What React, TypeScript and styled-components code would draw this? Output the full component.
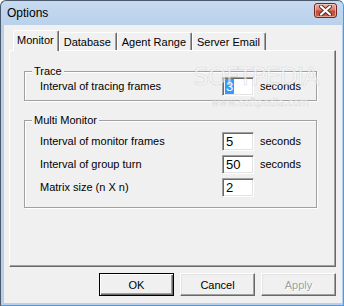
import React from "react";
import styled, { createGlobalStyle } from "styled-components";

const Global = createGlobalStyle`
  html, body { margin: 0; padding: 0; background: #ffffff; }
  body { font-family: "Liberation Sans", Arial, sans-serif; }
  * { box-sizing: border-box; }
`;

const Window = styled.div`
  position: relative;
  width: 344px;
  height: 306px;
  display: flex;
  flex-direction: column;
  background: linear-gradient(#c6daf0, #b7cfea 30px, #b7cfea);
  border-left: 1px solid #4b5a6c;
  border-top: 1px solid #4b5a6c;
  border-right: 1px solid #38a4f0;
  border-bottom: 1px solid #38a4f0;
  border-radius: 6px 6px 0 0;
  overflow: hidden;
`;

const TitleBar = styled.div`
  height: 24px;
  display: flex;
  align-items: center;
  padding: 0 6px 2px 6px;
  flex: none;
`;

const Title = styled.div`
  flex: 1;
  font-size: 12px;
  color: #000;
  padding-top: 1px;
`;

const CloseButton = styled.div`
  width: 23px;
  height: 15px;
  margin-top: -3px;
  border: 1px solid #6e2a22;
  border-radius: 3px;
  background: linear-gradient(#eab2a5, #d8806e 45%, #c34a36 55%, #c9614c);
  box-shadow: inset 0 0 0 1px rgba(255, 220, 210, 0.55);
  display: flex;
  align-items: center;
  justify-content: center;
`;

const Client = styled.div`
  flex: 1;
  margin: 0 1px 2px 3px;
  background: #f0f0f0;
  display: flex;
  flex-direction: column;
  padding: 5px 6px 7px 5px;
  font-size: 11px;
  color: #000;
`;

const TabStrip = styled.div`
  height: 20px;
  display: flex;
  align-items: flex-end;
  padding-left: 4px;
  position: relative;
  z-index: 1;
`;

const Tab = styled.div<{ $active?: boolean }>`
  height: ${(p) => (p.$active ? 21 : 18)}px;
  margin-bottom: ${(p) => (p.$active ? -1 : 0)}px;
  padding: ${(p) => (p.$active ? "3px 4px 0 3px" : "1px 5px 0 4px")};
  display: flex;
  align-items: ${(p) => (p.$active ? "flex-start" : "center")};
  background: #f0f0f0;
  border-top: 1px solid #ffffff;
  border-left: 1px solid #ffffff;
  border-right: 1px solid #696969;
  box-shadow: inset -1px 0 0 #a0a0a0;
  border-radius: 2px 2px 0 0;
  white-space: nowrap;
`;

const Panel = styled.div`
  height: 217px;
  background: #f0f0f0;
  border-top: 1px solid #ffffff;
  border-left: 1px solid #ffffff;
  border-right: 1px solid #696969;
  border-bottom: 1px solid #696969;
  box-shadow: inset -1px -1px 0 #a0a0a0;
  padding: 20px 18px 0 14px;
  display: flex;
  flex-direction: column;
`;

const GroupBox = styled.div<{ $gap?: number }>`
  position: relative;
  margin-top: ${(p) => p.$gap ?? 0}px;
  border: 1px solid #a0a0a0;
  box-shadow: 1px 1px 0 #ffffff, inset 1px 1px 0 #ffffff;
  padding: ${(p) => (p.$gap ? "11px 0 10px 15px" : "5px 0 4px 15px")};
  display: flex;
  flex-direction: column;
  gap: 4px;
`;

const Caption = styled.span`
  position: absolute;
  top: -7px;
  left: 7px;
  padding: 0 2px;
  line-height: 13px;
  background: #f0f0f0;
`;

const Row = styled.div`
  display: grid;
  grid-template-columns: 182px 32px auto;
  align-items: center;
  height: 19px;
`;

const Label = styled.span`
  line-height: 13px;
`;

const Field = styled.div`
  width: 32px;
  height: 19px;
  background: #ffffff;
  border-top: 1px solid #a0a0a0;
  border-left: 1px solid #a0a0a0;
  border-right: 1px solid #ffffff;
  border-bottom: 1px solid #ffffff;
  box-shadow: inset 1px 1px 0 #696969, inset -1px -1px 0 #e3e3e3;
  padding: 0 0 0 3px;
  display: flex;
  align-items: center;
  font-size: 13px;
`;

const Selected = styled.span`
  background: #3399ff;
  color: #ffffff;
  line-height: 15px;
  padding: 0 1px;
  margin-left: -1px;
`;

const Unit = styled.span`
  padding-left: 6px;
  line-height: 13px;
`;

const ButtonRow = styled.div`
  display: flex;
  justify-content: flex-end;
  gap: 6px;
  margin-top: 6px;
`;

const Button = styled.div<{ $default?: boolean; $disabled?: boolean }>`
  width: 75px;
  height: 23px;
  display: flex;
  align-items: center;
  justify-content: center;
  background: #f0f0f0;
  border: 1px solid ${(p) => (p.$default ? "#000000" : "transparent")};
  border-top-color: ${(p) => (p.$default ? "#000000" : "#ffffff")};
  border-left-color: ${(p) => (p.$default ? "#000000" : "#ffffff")};
  border-right-color: ${(p) => (p.$default ? "#000000" : "#696969")};
  border-bottom-color: ${(p) => (p.$default ? "#000000" : "#696969")};
  box-shadow: ${(p) =>
    p.$default
      ? "inset 1px 1px 0 #ffffff, inset -1px -1px 0 #696969, inset -2px -2px 0 #a0a0a0"
      : "inset -1px -1px 0 #a0a0a0, inset 1px 1px 0 #e3e3e3"};
  color: ${(p) => (p.$disabled ? "#a0a0a0" : "#000000")};
  text-shadow: ${(p) => (p.$disabled ? "1px 1px 0 #ffffff" : "none")};
  font-size: 11px;
`;

const Watermark = styled.div`
  position: absolute;
  left: 188px;
  top: 62px;
  width: 134px;
  display: flex;
  flex-direction: column;
  align-items: center;
  pointer-events: none;
`;

const MarkBig = styled.span`
  font-family: "DejaVu Sans", sans-serif;
  font-size: 24px;
  letter-spacing: -1px;
  color: rgba(255, 255, 255, 0.55);
  -webkit-text-stroke: 0.6px rgba(190, 190, 190, 0.55);
  line-height: 28px;
`;

const MarkSmall = styled.span`
  font-family: "DejaVu Sans", sans-serif;
  font-size: 10px;
  color: rgba(255, 255, 255, 0.6);
  -webkit-text-stroke: 0.4px rgba(185, 185, 185, 0.5);
  margin-top: 6px;
  margin-left: 8px;
`;

const CloseIcon = () => (
  <svg width="13" height="11" viewBox="0 0 13 11">
    <path d="M2 1.5 L11 9.5 M11 1.5 L2 9.5" stroke="#5a2a22" strokeWidth="4" strokeLinecap="round" />
    <path d="M2 1.5 L11 9.5 M11 1.5 L2 9.5" stroke="#ffffff" strokeWidth="2.2" strokeLinecap="round" />
  </svg>
);

const tabs = ["Monitor", "Database", "Agent Range", "Server Email"];

export default function App() {
  return (
    <>
      <Global />
      <Window>
        <TitleBar>
          <Title>Options</Title>
          <CloseButton>
            <CloseIcon />
          </CloseButton>
        </TitleBar>
        <Client>
          <TabStrip>
            {tabs.map((t, i) => (
              <Tab key={t} $active={i === 0}>
                {t}
              </Tab>
            ))}
          </TabStrip>
          <Panel>
            <GroupBox>
              <Caption>Trace</Caption>
              <Row>
                <Label>Interval of tracing frames</Label>
                <Field>
                  <Selected>3</Selected>
                </Field>
                <Unit>seconds</Unit>
              </Row>
            </GroupBox>
            <GroupBox $gap={19}>
              <Caption>Multi Monitor</Caption>
              <Row>
                <Label>Interval of monitor frames</Label>
                <Field>5</Field>
                <Unit>seconds</Unit>
              </Row>
              <Row>
                <Label>Interval of group turn</Label>
                <Field>50</Field>
                <Unit>seconds</Unit>
              </Row>
              <Row>
                <Label>Matrix size (n X n)</Label>
                <Field>2</Field>
              </Row>
            </GroupBox>
          </Panel>
          <ButtonRow>
            <Button $default>OK</Button>
            <Button>Cancel</Button>
            <Button $disabled>Apply</Button>
          </ButtonRow>
        </Client>
        <Watermark>
          <MarkBig>SOFTPEDIA</MarkBig>
          <MarkSmall>www.softpedia.com</MarkSmall>
        </Watermark>
      </Window>
    </>
  );
}
